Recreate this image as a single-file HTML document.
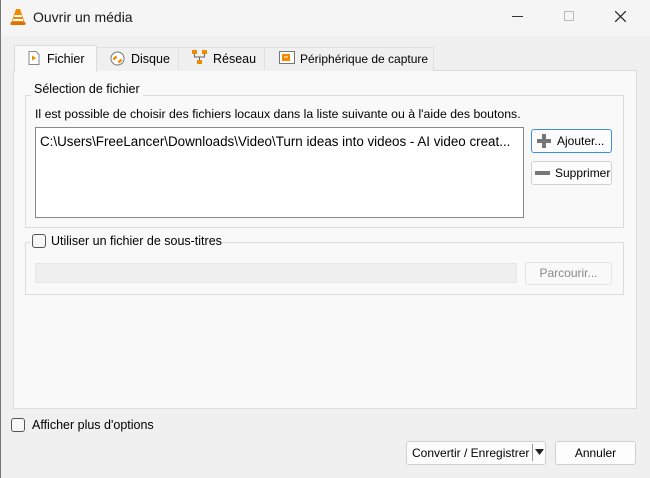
<!DOCTYPE html>
<html><head><meta charset="utf-8"><style>
*{box-sizing:border-box;margin:0;padding:0}
body{width:650px;height:478px;overflow:hidden;background:#f0f0f0;font-family:"Liberation Sans",sans-serif;font-size:11.5px;color:#000;position:relative}
.a{position:absolute;white-space:nowrap}
.btn{position:absolute;background:#fdfdfd;border:1px solid #d0d0d0;border-radius:3px;text-align:center;font-size:11.5px}
.cb{position:absolute;width:14px;height:14px;border:1px solid #555;border-radius:3px;background:#f7f7f7}
</style></head><body>
<div class="a" style="left:0;top:0;width:650px;height:36px;background:#f5f5f5"></div>
<div class="a" style="left:0;top:0;width:1px;height:478px;background:#777"></div>
<svg class="a" style="left:10px;top:8px" width="16" height="18" viewBox="0 0 16 18"><path d="M6 1h4l4.5 13h-13z" fill="#f08a00"/><path d="M4.6 7h6.8l.7 2H3.9zM3.3 11h9.4l.6 2H2.7z" fill="#fff"/><rect x="0.5" y="14" width="15" height="3" rx="1" fill="#e06e00"/></svg>
<div class="a" style="left:33px;top:9px;font-size:14px;color:#1a1a1a">Ouvrir un média</div>
<div class="a" style="left:512px;top:16px;width:11px;height:1px;background:#333"></div>
<div class="a" style="left:564px;top:11px;width:10px;height:10px;border:1px solid #bbb"></div>
<svg class="a" style="left:615px;top:11px" width="11" height="11"><path d="M0 0L11 11M11 0L0 11" stroke="#222" stroke-width="1.2"/></svg>

<div class="a" style="left:13px;top:70px;width:624px;height:339px;background:#f9f9f9;border:1px solid #dcdcdc"></div>
<div class="a" style="left:96px;top:47px;width:338px;height:24px;background:#f0f0f0;border:1px solid #e0e0e0;border-bottom:none"></div>
<div class="a" style="left:178px;top:47px;width:1px;height:23px;background:#e0e0e0"></div>
<div class="a" style="left:264px;top:47px;width:1px;height:23px;background:#e0e0e0"></div>
<div class="a" style="left:14px;top:45px;width:83px;height:27px;background:#f9f9f9;border:1px solid #dcdcdc;border-bottom:none"></div>
<svg class="a" style="left:28px;top:51px" width="12" height="14"><path d="M1 .5h7l3 3v10H1z" fill="#fff" stroke="#888"/><path d="M4 4.5l4 2.5-4 2.5z" fill="#f08a00"/></svg>
<div class="a" style="left:47px;top:52px;font-size:12.5px">Fichier</div>
<svg class="a" style="left:110px;top:51px" width="15" height="15"><circle cx="7.5" cy="7.5" r="6.5" fill="#fff" stroke="#777"/><path d="M3.5 8.5l3-3M8.5 11.5l3-3" stroke="#f08a00" stroke-width="2.5"/></svg>
<div class="a" style="left:131px;top:52px;font-size:12.5px">Disque</div>
<svg class="a" style="left:192px;top:50px" width="16" height="16"><rect x="0" y="0" width="5" height="4" fill="#f08a00"/><rect x="10" y="0" width="5" height="4" fill="#f08a00"/><rect x="5" y="10" width="5" height="4" fill="#f08a00"/><path d="M2.5 4v3h10V4M7.5 7v3" stroke="#666" fill="none"/></svg>
<div class="a" style="left:213px;top:52px;font-size:12.5px">Réseau</div>
<svg class="a" style="left:279px;top:51px" width="16" height="14"><rect x="0.5" y="0.5" width="15" height="12" fill="#fff" stroke="#777"/><rect x="3" y="3" width="8" height="7" fill="#f08a00"/><path d="M5 6h4M12.5 4v5" stroke="#fff"/></svg>
<div class="a" style="left:300px;top:52px;font-size:12px">Périphérique de capture</div>

<div class="a" style="left:25px;top:95px;width:599px;height:133px;border:1px solid #dcdcdc"></div>
<div class="a" style="left:31px;top:82px;padding:0 3px;background:#f9f9f9;font-size:12.5px">Sélection de fichier</div>
<div class="a" style="left:35px;top:107px;font-size:12.3px">Il est possible de choisir des fichiers locaux dans la liste suivante ou à l'aide des boutons.</div>
<div class="a" style="left:35px;top:127px;width:489px;height:91px;background:#fff;border:1px solid #888"></div>
<div class="a" style="left:40px;top:134px;font-size:13.4px">C:\Users\FreeLancer\Downloads\Video\Turn ideas into videos - AI video creat...</div>
<div class="btn" style="left:531px;top:129px;width:81px;height:24px;border-color:#3d8ee0"></div>
<svg class="a" style="left:537px;top:134px" width="14" height="14"><path d="M5 0h4v5h5v4H9v5H5V9H0V5h5z" fill="#777"/></svg>
<div class="a" style="left:557px;top:134px;font-size:12px">Ajouter...</div>
<div class="btn" style="left:531px;top:161px;width:81px;height:24px"></div>
<div class="a" style="left:535px;top:171px;width:15px;height:4px;background:#777"></div>
<div class="a" style="left:555px;top:166px;font-size:12px">Supprimer</div>

<div class="a" style="left:25px;top:242px;width:599px;height:53px;border:1px solid #dcdcdc"></div>
<div class="a" style="left:30px;top:234px;width:186px;height:14px;background:#f9f9f9"></div>
<div class="cb" style="left:32px;top:234px"></div>
<div class="a" style="left:51px;top:234px;font-size:12.5px">Utiliser un fichier de sous-titres</div>
<div class="a" style="left:35px;top:263px;width:482px;height:20px;background:#efefef;border:1px solid #e6e6e6"></div>
<div class="btn" style="left:525px;top:262px;width:87px;height:23px;border-color:#e4e4e4;background:#f9f9f9;color:#888;line-height:21px;font-size:12px">Parcourir...</div>

<div class="cb" style="left:11px;top:418px"></div>
<div class="a" style="left:32px;top:418px;font-size:12.5px">Afficher plus d'options</div>
<div class="btn" style="left:406px;top:441px;width:140px;height:24px;line-height:22px;text-align:left;padding-left:5px;font-size:12px">Convertir / Enregistrer</div>
<div class="a" style="left:532px;top:444px;width:1px;height:17px;background:#999"></div>
<svg class="a" style="left:535px;top:449px" width="9" height="6"><path d="M0 0h9L4.5 6z" fill="#222"/></svg>
<div class="btn" style="left:555px;top:441px;width:81px;height:24px;line-height:22px;font-size:12px">Annuler</div>
</body></html>
